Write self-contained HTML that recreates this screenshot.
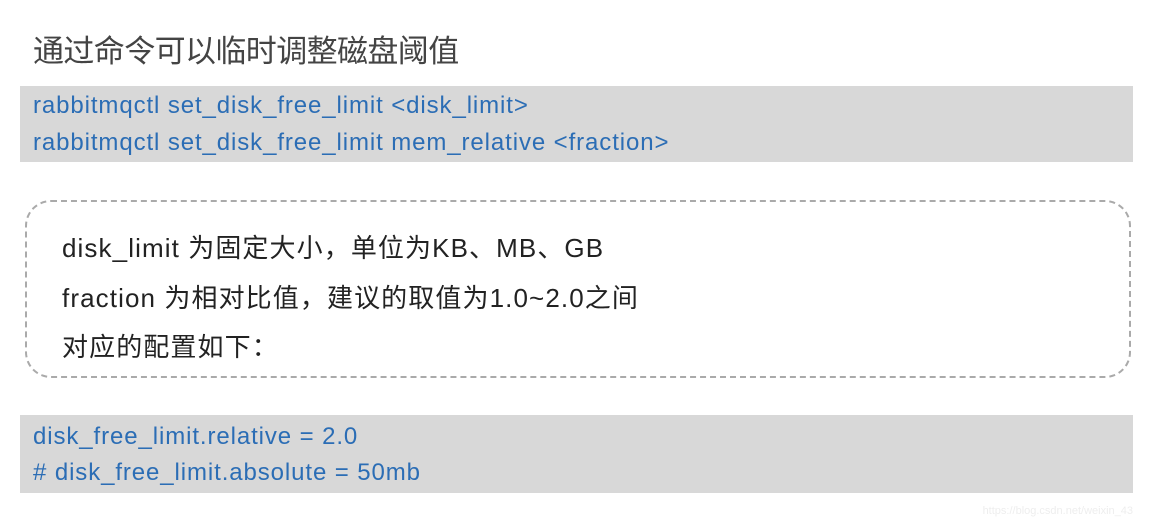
<!DOCTYPE html>
<html><head><meta charset="utf-8"><style>
body{margin:0;width:1153px;height:523px;background:#fff;position:relative;overflow:hidden;font-family:"Liberation Sans","Noto Sans CJK SC",sans-serif;}
.t{position:absolute;white-space:nowrap;}
.title{left:33px;top:26px;font-size:31px;letter-spacing:-0.6px;color:#444;}
.gray{position:absolute;left:20px;width:1113px;background:#d8d8d8;}
.blue{color:#2b6db5;font-size:24px;letter-spacing:0.9px;}
.dash{position:absolute;left:25px;top:200px;width:1106px;height:178px;border:2px dashed #aaa;border-radius:26px;box-sizing:border-box;}
.d{font-size:26px;color:#222;left:62px;letter-spacing:1.1px;}
.wm{right:20px;bottom:6px;font-size:11px;color:#eee;}
</style></head><body>
<div class="t title">通过命令可以临时调整磁盘阈值</div>
<div class="gray" style="top:86px;height:76px"></div>
<div class="t blue" style="left:33px;top:92px">rabbitmqctl set_disk_free_limit &lt;disk_limit&gt;</div>
<div class="t blue" style="left:33px;top:129px">rabbitmqctl set_disk_free_limit mem_relative &lt;fraction&gt;</div>
<div class="dash"></div>
<div class="t d" style="top:228px">disk_limit 为固定大小，单位为KB、MB、GB</div>
<div class="t d" style="top:278px">fraction 为相对比值，建议的取值为1.0~2.0之间</div>
<div class="t d" style="top:327px">对应的配置如下：</div>
<div class="gray" style="top:415px;height:78px"></div>
<div class="t blue" style="left:33px;top:423px">disk_free_limit.relative = 2.0</div>
<div class="t blue" style="left:33px;top:459px"># disk_free_limit.absolute = 50mb</div>
<div class="t wm">https://blog.csdn.net/weixin_43</div>
</body></html>
